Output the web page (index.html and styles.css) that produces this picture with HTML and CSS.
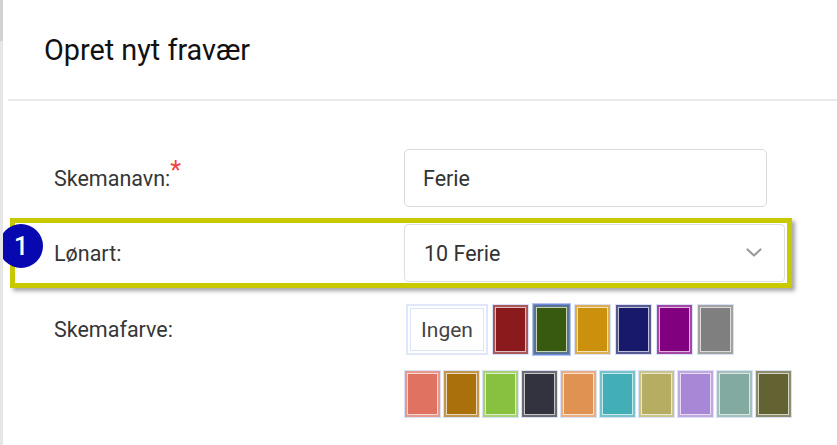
FILE: index.html
```html
<!DOCTYPE html>
<html>
  <head>
    <title>Opret nyt fravær</title>
    <meta name="viewport" content="width=device-width, initial-scale=1">
    <link rel="stylesheet" href="styles.css">
  </head>
  <body>
    <div class="modal">
      <header class="modal-header">
        <h1>Opret nyt fravær</h1>
      </header>

      <form class="modal-body">
        <div class="field">
          <label class="field-label" for="scheduleName">Skemanavn:<span class="required">*</span></label>
          <input id="scheduleName" class="text-input" type="text" value="Ferie">
        </div>

        <div class="field field-marked">
          <span class="step-badge">1</span>
          <label class="field-label">Lønart:</label>
          <div class="select-box">
            <span>10 Ferie</span>
            <svg class="chevron" width="16" height="10" viewBox="0 0 16 10">
              <polyline points="1.5,1.5 8,7.5 14.5,1.5" fill="none" stroke="#9b9b9b" stroke-width="2.2" stroke-linecap="round" stroke-linejoin="round"/>
            </svg>
          </div>
        </div>

        <div class="field field-colors">
          <label class="field-label">Skemafarve:</label>
          <div class="palette">
            <div class="palette-row">
              <div class="swatch swatch-none"><div class="swatch-fill">Ingen</div></div>
              <div class="swatch"><div class="swatch-fill" style="background:#8a1a1c"></div></div>
              <div class="swatch is-selected"><div class="swatch-fill" style="background:#385a10"></div></div>
              <div class="swatch"><div class="swatch-fill" style="background:#cb900c"></div></div>
              <div class="swatch"><div class="swatch-fill" style="background:#19196b"></div></div>
              <div class="swatch"><div class="swatch-fill" style="background:#800080"></div></div>
              <div class="swatch"><div class="swatch-fill" style="background:#7f7f7f"></div></div>
            </div>
            <div class="palette-row palette-row-dense">
              <div class="swatch"><div class="swatch-fill" style="background:#e07262"></div></div>
              <div class="swatch"><div class="swatch-fill" style="background:#aa700c"></div></div>
              <div class="swatch"><div class="swatch-fill" style="background:#88c040"></div></div>
              <div class="swatch"><div class="swatch-fill" style="background:#33323f"></div></div>
              <div class="swatch"><div class="swatch-fill" style="background:#e09252"></div></div>
              <div class="swatch"><div class="swatch-fill" style="background:#42aeb6"></div></div>
              <div class="swatch"><div class="swatch-fill" style="background:#b6ad62"></div></div>
              <div class="swatch"><div class="swatch-fill" style="background:#a888d6"></div></div>
              <div class="swatch"><div class="swatch-fill" style="background:#82aaa0"></div></div>
              <div class="swatch"><div class="swatch-fill" style="background:#636232"></div></div>
            </div>
          </div>
        </div>
      </form>
    </div>
  </body>
</html>
```

FILE: styles.css
```css
* {
    box-sizing: border-box;
}

body {
    margin: 0;
    font-family: Roboto, "Liberation Sans", Arial, sans-serif;
    color: #3c3c3c;
    background: #fff;
}

.modal {
    height: 445px;
    overflow: hidden;
    border-left: 3px solid #e4e4e4;
    border-image: linear-gradient(to bottom, #d2d2d2 42px, #e6e6e6 42px) 1;
}

.modal-header {
    height: 101px;
    margin-left: 5px;
    padding-left: 36px;
    display: flex;
    align-items: center;
    border-bottom: 2px solid #e9e9e9;
}

.modal-header h1 {
    margin: 0;
    font-size: 28.8px;
    font-weight: 400;
    color: #111;
}

.modal-body {
    padding-top: 42px;
}

/* each row keeps a transparent frame so the marked one lines up */
.field {
    position: relative;
    display: grid;
    grid-template-columns: 350px 1fr;
    align-items: center;
    width: 782px;
    margin-left: 7px;
    padding: 1px 0 1px 39px;
    border: 5px solid transparent;
}

.field + .field {
    margin-top: 5px;
}

.field-marked {
    border-color: #c9c900;
    box-shadow: 3px 3px 4px rgba(0, 0, 0, 0.35);
}

.field-colors {
    align-items: start;
}

.field + .field-colors {
    margin-top: 10px;
}

.field-label {
    font-size: 21.5px;
    color: #363636;
}

.field-colors .field-label {
    line-height: 51px;
}

.required {
    color: #f04444;
    font-size: 25px;
    vertical-align: 7px;
    line-height: 0;
}

.text-input {
    width: 363px;
    height: 58px;
    padding: 0 18px;
    border: 1px solid #dadada;
    border-radius: 5px;
    font-family: inherit;
    font-size: 21.5px;
    color: #333;
    outline: none;
}

.select-box {
    height: 58px;
    margin-right: 2px;
    padding: 0 22px 0 19px;
    display: flex;
    align-items: center;
    justify-content: space-between;
    border: 1px solid #dedede;
    border-radius: 4px;
    font-size: 21.5px;
    color: #333;
}

.chevron {
    display: block;
}

.step-badge {
    position: absolute;
    left: -16px;
    top: 1px;
    width: 44px;
    height: 44px;
    border-radius: 50%;
    background: #0808b0;
    color: #fff;
    font-size: 25px;
    font-weight: 500;
    display: flex;
    align-items: center;
    justify-content: center;
}

.palette {
    display: flex;
    flex-direction: column;
    gap: 15px;
}

.palette-row {
    display: flex;
    gap: 4px;
    margin-left: 2px;
}

.palette-row .swatch {
    height: 51px;
}

.palette-row-dense {
    gap: 2px;
    margin-left: 0;
}

.palette-row-dense .swatch {
    height: 48px;
}

.swatch {
    width: 37px;
    border: 1px solid #d8e1f7;
}

.swatch-fill {
    height: 100%;
    border: 2px solid rgba(255, 255, 255, 0.28);
    box-shadow: inset 0 0 0 1px rgba(255, 255, 255, 0.72);
}

.swatch.is-selected {
    border-color: #6f86e0;
    box-shadow: 0 0 0 1px #b4c2f2;
}

.swatch.is-selected .swatch-fill {
    border-color: rgba(110, 134, 226, 0.6);
}

.swatch-none {
    width: 82px;
    border: 2px solid #dfe7f8;
}

.swatch-none .swatch-fill {
    display: flex;
    align-items: center;
    justify-content: center;
    background: #fff;
    border-color: #fff;
    box-shadow: inset 0 0 0 1px #dce4f7;
    font-size: 21px;
    color: #444;
}
```
